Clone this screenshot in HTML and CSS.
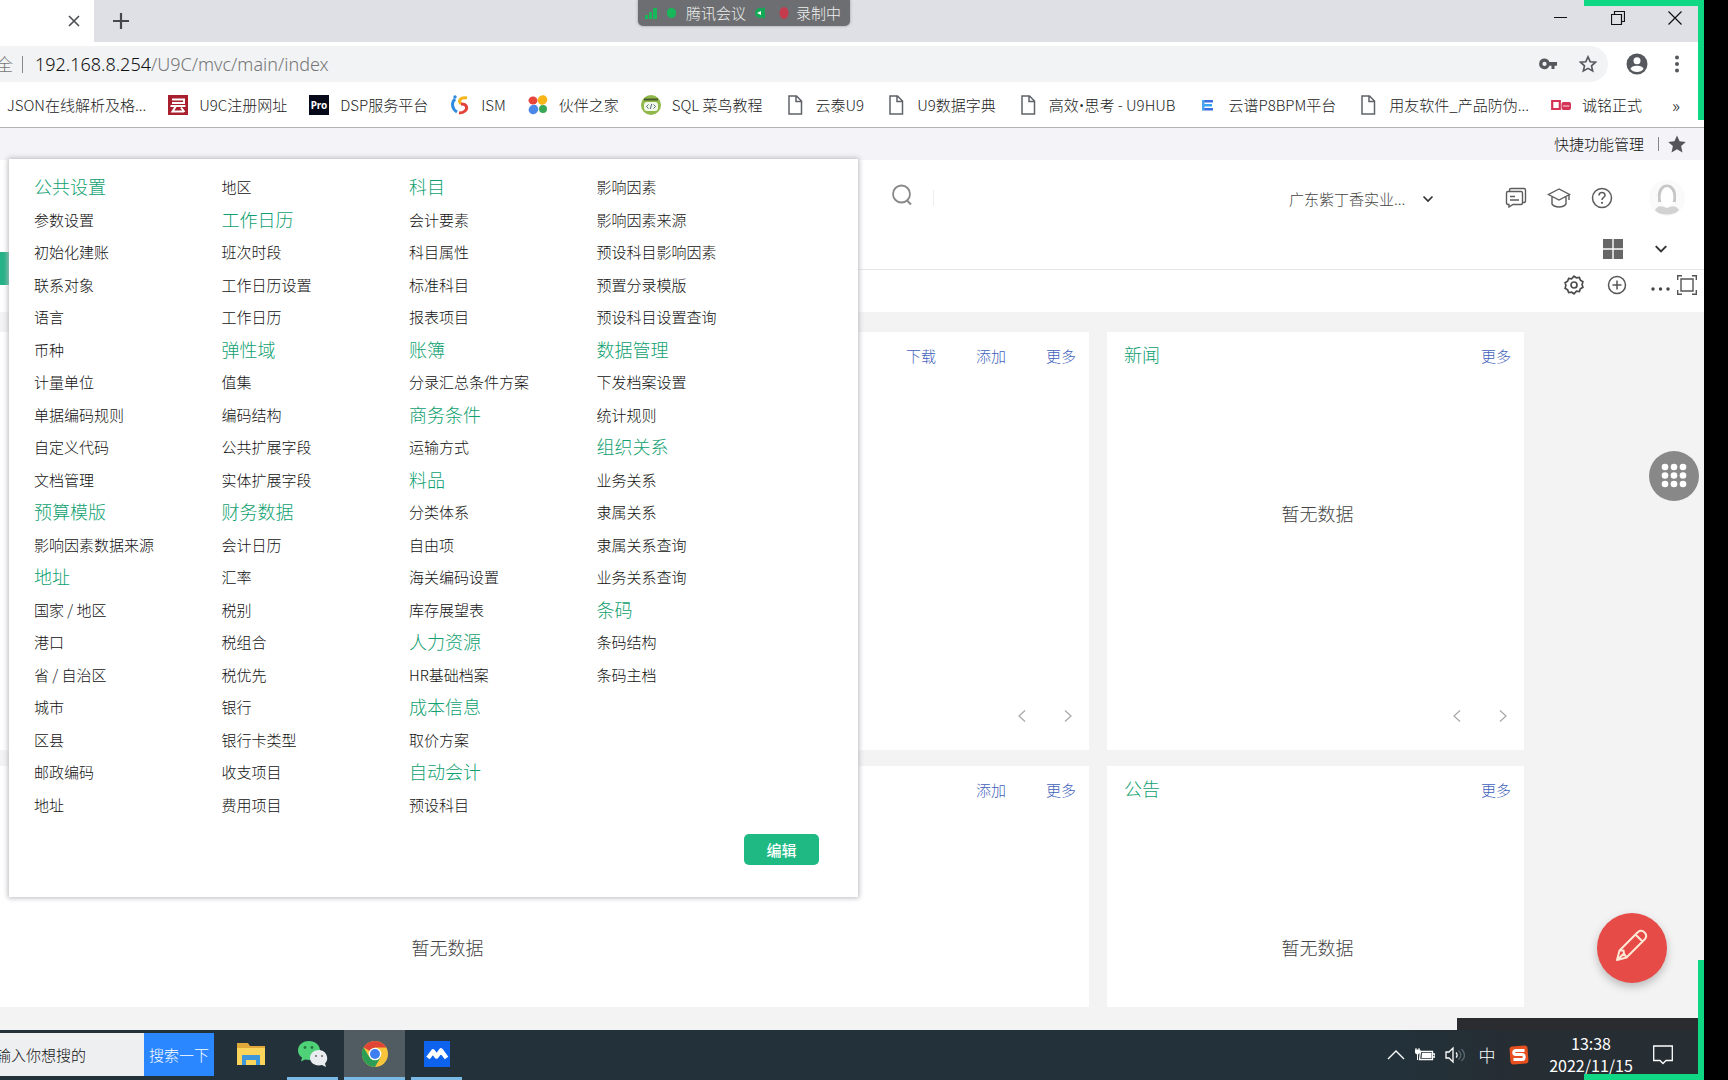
FILE: index.html
```html
<!DOCTYPE html>
<html lang="zh-CN">
<head>
<meta charset="utf-8">
<title>U9C</title>
<link rel="stylesheet" href="styles.css">
</head>
<body>
<svg width="0" height="0" class="defs" aria-hidden="true">
  <symbol id="file" viewBox="0 0 20 20"><path d="M4 1h7.500l5 5v13H4zM11 1v5.500h5.500" fill="none" stroke="#5f6368" stroke-width="1.500"/></symbol>
  <symbol id="down" viewBox="0 0 12 12"><path d="M1.500 3.500 6 8l4.500-4.500" fill="none" stroke="#333" stroke-width="1.700"/></symbol>
  <symbol id="prev" viewBox="0 0 12 14"><path d="M9 1.500 3 7l6 5.500" fill="none" stroke="#aaa" stroke-width="1.300"/></symbol>
  <symbol id="next" viewBox="0 0 12 14"><path d="M3 1.500 9 7l-6 5.500" fill="none" stroke="#aaa" stroke-width="1.300"/></symbol>
</svg>

<div class="screen">
  <div class="tabstrip">
    <div class="tab">
      <button class="plain" aria-label="关闭标签页"><svg width="12" height="12" viewBox="0 0 12 12"><path d="m1 1 10 10M11 1 1 11" stroke="#4a4d51" stroke-width="1.600"/></svg></button>
    </div>
    <button class="plain newtab" aria-label="新标签页"><svg width="16" height="16" viewBox="0 0 16 16"><path d="M8 0v16M0 8h16" stroke="#45484c" stroke-width="2.200"/></svg></button>
    <div class="winctl">
      <button class="plain" aria-label="最小化"><svg width="14" height="14" viewBox="0 0 14 14"><path d="M0 6.500h13" stroke="#111"/></svg></button>
      <button class="plain" aria-label="还原"><svg width="14" height="14" viewBox="0 0 14 14"><path d="M.5 3.500h10v10H.5zM3.500 3V.5h10v10H11" fill="none" stroke="#111" stroke-width="1.200"/></svg></button>
      <button class="plain" aria-label="关闭"><svg width="14" height="14" viewBox="0 0 14 14"><path d="m.5.5 13 13M13.500.5l-13 13" stroke="#111" stroke-width="1.200"/></svg></button>
    </div>
  </div>

  <div class="toolbar">
    <div class="omnibox">
      <span class="secure">全</span><span class="bar"></span>
      <span class="url"><b>192.168.8.254</b>/U9C/mvc/main/index</span>
      <button class="plain push" aria-label="密码"><svg width="18" height="12" viewBox="0 0 18 12"><path d="M5.500.5a5.300 5.300 0 1 0 4.900 7.300h2.100V11h3V7.800H18V4h-7.600A5.300 5.300 0 0 0 5.500.5zm0 3.300a2.100 2.100 0 1 1 0 4.200 2.100 2.100 0 0 1 0-4.200z" fill="#55585c"/></svg></button>
      <button class="plain" aria-label="收藏"><svg width="18" height="18" viewBox="0 0 18 18"><path d="m9 1.800 2.200 4.900 5.300.5-4 3.600 1.200 5.200L9 13.300 4.300 16l1.200-5.200-4-3.600 5.300-.5z" fill="none" stroke="#55585c" stroke-width="1.600"/></svg></button>
    </div>
    <button class="plain" aria-label="帐号"><svg width="22" height="22" viewBox="0 0 22 22"><circle cx="11" cy="11" r="10.500" fill="#55585c"/><circle cx="11" cy="7.800" r="3.500" fill="#fff"/><path d="M4.500 16c.5-4.500 12.500-4.500 13 0-2.500 4-10.500 4-13 0z" fill="#fff"/></svg></button>
    <button class="plain" aria-label="菜单"><svg width="6" height="18" viewBox="0 0 6 18"><g fill="#55585c"><circle cx="3" cy="2.500" r="2"/><circle cx="3" cy="9" r="2"/><circle cx="3" cy="15.500" r="2"/></g></svg></button>
  </div>

  <nav class="bookmarks">
    <a href="#">JSON在线解析及格...</a>
    <a href="#"><svg width="20" height="20" viewBox="0 0 20 20"><path d="M0 0h20v20H0z" fill="#a8202e"/><path d="M4 4.500h12V8H4M2.500 11h15M8 11l-3.500 5.500H16M13 12.500l3.500 4.500" fill="none" stroke="#fff" stroke-width="2"/></svg>U9C注册网址</a>
    <a href="#"><svg width="20" height="20" viewBox="0 0 20 20"><path d="M0 0h20v20H0z" fill="#05091a"/><text x="10" y="14" text-anchor="middle" class="pro">Pro</text></svg>DSP服务平台</a>
    <a href="#"><svg width="20" height="20" viewBox="0 0 20 20"><g fill="none" stroke-width="3"><path d="M5 4c-4 4-3 10 2 13" stroke="#2f8be0"/><path d="M17 3c-7-1-9 3-6 6" stroke="#f5b51b"/><path d="M11 9c6 0 7 4 4 7-2 2-4 2-6 2" stroke="#e2433a"/></g><circle cx="5" cy="2" r="1.700" fill="#2f8be0"/></svg>ISM</a>
    <a href="#"><svg width="20" height="20" viewBox="0 0 20 20"><ellipse cx="5" cy="5.500" rx="4.500" ry="4" fill="#e8443a"/><ellipse cx="14.500" cy="5" rx="5" ry="4.500" fill="#f7b516" transform="rotate(-35 14.500 5)"/><ellipse cx="5.500" cy="14.500" rx="5" ry="4.500" fill="#4a87ea" transform="rotate(-35 5.500 14.500)"/><circle cx="15" cy="14" r="4" fill="#39a854"/></svg>伙伴之家</a>
    <a href="#"><svg width="20" height="20" viewBox="0 0 20 20"><circle cx="10" cy="10" r="10" fill="#8fb94a"/><rect x="3" y="7" width="14" height="9" rx="3" fill="#f3f7e8"/><path d="M3 4.500h14" stroke="#4a5a2c" stroke-width="2"/><path d="M7.500 9.500 5.500 11.500l2 2M12.500 9.500l2 2-2 2M10.700 9l-1.400 5" fill="none" stroke="#4c6b88"/></svg>SQL 菜鸟教程</a>
    <a href="#"><svg width="20" height="20"><use href="#file"/></svg>云泰U9</a>
    <a href="#"><svg width="20" height="20"><use href="#file"/></svg>U9数据字典</a>
    <a href="#"><svg width="20" height="20"><use href="#file"/></svg><span>高效<span class="bullet">•</span>思考 - U9HUB</span></a>
    <a href="#"><svg width="20" height="20" viewBox="0 0 20 20"><path d="M4 5h11v2.500H4zM4 13h11v2.500H4z" fill="#3a6fe0"/><path d="M4 9h10v2.500H4z" fill="#38a6ee"/><path d="M4 5h2.500v10H4z" fill="#4aa4f0"/></svg>云谱P8BPM平台</a>
    <a href="#"><svg width="20" height="20"><use href="#file"/></svg>用友软件_产品防伪...</a>
    <a href="#"><svg width="20" height="20" viewBox="0 0 20 20"><path d="M1.200 6h7.600v8H1.200z" fill="#fff" stroke="#d43355" stroke-width="2.200"/><rect x="10.500" y="7" width="9.500" height="8" rx="2" fill="#d43355"/><path d="M12 11h6.500" stroke="#f3a5b4" stroke-width="1.500"/></svg>诚铭正式</a>
    <a href="#" class="more">»</a>
  </nav>

  <div class="shortcut">
    <a href="#">快捷功能管理</a><span class="bar"></span>
    <svg width="18" height="18" viewBox="0 0 18 18"><path d="m9 .5 2.600 5.800 6.200.6-4.700 4.200 1.400 6.300L9 14.200l-5.500 3.200 1.400-6.300L.2 6.900l6.200-.6z" fill="#55555a"/></svg>
  </div>

  <main class="page">
    <header class="apphead">
      <svg class="search" width="22" height="22" viewBox="0 0 22 22"><circle cx="10.500" cy="10" r="8.500" fill="none" stroke="#888" stroke-width="1.800"/><path d="m16 16.500 4 4" stroke="#888" stroke-width="2"/></svg>
      <span class="caret"></span>
      <label class="org"><select aria-label="组织"><option>广东紫丁香实业...</option></select><svg width="12" height="12"><use href="#down"/></svg></label>
      <div class="headicons">
        <svg width="24" height="24" viewBox="0 0 24 24"><g fill="none" stroke="#5c5c5c" stroke-width="1.400"><path d="M5.500 5V4a1.500 1.500 0 0 1 1.500-1.500h13A1.500 1.500 0 0 1 21.500 4v11a1.500 1.500 0 0 1-1.500 1.500h-1"/><path d="M4 5.500h13A1.500 1.500 0 0 1 18.500 7v10a1.500 1.500 0 0 1-1.500 1.500H9l-4 2.500v-2.500H4A1.500 1.500 0 0 1 2.500 17V7A1.500 1.500 0 0 1 4 5.500zM6 10.500h5M6 14h9"/></g></svg>
        <svg width="24" height="24" viewBox="0 0 24 24"><path d="M12 3 1.500 8.500 12 14l10.500-5.500zM5 11v7c3 4 11 4 14 0v-7M22 9v5" fill="none" stroke="#5c5c5c" stroke-width="1.400"/></svg>
        <svg width="24" height="24" viewBox="0 0 24 24"><g fill="none" stroke="#5c5c5c" stroke-width="1.500"><circle cx="12" cy="12" r="9.500"/><path d="M9 9.500c0-4 6-4 6 0 0 2-3 2-3 4.500"/></g><circle cx="12" cy="16.800" r="1.100" fill="#5c5c5c"/></svg>
      </div>
      <svg class="avatar" width="36" height="36" viewBox="0 0 36 36"><circle cx="18" cy="18" r="18" fill="#fafafa"/><path d="M9 18C7 0 29 0 27 18v4H9z" fill="#c6c6c6"/><ellipse cx="18" cy="17" rx="6.500" ry="10" fill="#fff"/><path d="M6 30c4-6 8-3 12-2 4-1 8-4 12 2-4 6-20 6-24 0z" fill="#d2d2d2"/></svg>
    </header>
    <div class="apptabs">
      <button class="plain" aria-label="全部页签"><svg width="20" height="20" viewBox="0 0 20 20"><path d="M0 0h9.300v9.300H0zM10.700 0H20v9.300h-9.300zM0 10.700h9.300V20H0zM10.700 10.700H20V20h-9.300z" fill="#666"/></svg></button>
      <button class="plain" aria-label="展开"><svg width="14" height="14"><use href="#down"/></svg></button>
      <span class="lefttab"></span>
    </div>
    <div class="tools">
      <button class="plain" aria-label="设置"><svg width="20" height="20" viewBox="0 0 20 20"><g fill="none" stroke="#4d4d4d" stroke-width="1.700"><path d="m10 1.200 2.400 1.600 2.900-.3 1.100 2.600 2.500 1.600-.8 2.800.8 2.800-2.500 1.600-1.100 2.700-2.900-.4L10 18.800l-2.400-1.600-2.900.4-1.100-2.700-2.500-1.600.8-2.800-.8-2.800 2.500-1.600 1.100-2.600 2.900.3z"/><circle cx="10" cy="10" r="3"/></g></svg></button>
      <button class="plain" aria-label="添加组件"><svg width="20" height="20" viewBox="0 0 20 20"><g fill="none" stroke="#555" stroke-width="1.500"><circle cx="10" cy="10" r="8.500"/><path d="M10 5.500v9M5.500 10h9"/></g></svg></button>
      <span class="pair"><button class="plain dots" aria-label="更多操作"><svg width="20" height="20" viewBox="0 0 20 20"><g fill="#444"><circle cx="3" cy="14" r="1.700"/><circle cx="10.500" cy="14" r="1.700"/><circle cx="18" cy="14" r="1.700"/></g></svg></button>
      <button class="plain" aria-label="全屏"><svg width="20" height="20" viewBox="0 0 20 20"><path d="M4 4h12v12H4zM.7 5V.7H5M15 .7h4.300V5M19.300 15v4.300H15M5 19.300H.7V15" fill="none" stroke="#555" stroke-width="1.400"/></svg></button></span>
    </div>

    <div class="dash">
      <section class="card wide">
        <div class="cardhead"><a href="#">下载</a><a href="#">添加</a><a href="#">更多</a></div>
        <div class="pager"><button class="plain" aria-label="上一页"><svg width="12" height="14"><use href="#prev"/></svg></button><button class="plain" aria-label="下一页"><svg width="12" height="14"><use href="#next"/></svg></button></div>
      </section>
      <section class="card">
        <div class="cardhead"><h2>新闻</h2><a href="#">更多</a></div>
        <p class="empty">暂无数据</p>
        <div class="pager"><button class="plain" aria-label="上一页"><svg width="12" height="14"><use href="#prev"/></svg></button><button class="plain" aria-label="下一页"><svg width="12" height="14"><use href="#next"/></svg></button></div>
      </section>
      <section class="card wide">
        <div class="cardhead"><a href="#">添加</a><a href="#">更多</a></div>
        <p class="empty">暂无数据</p>
      </section>
      <section class="card">
        <div class="cardhead"><h2>公告</h2><a href="#">更多</a></div>
        <p class="empty">暂无数据</p>
      </section>
    </div>
  </main>

  <div class="popup">
    <ul class="menu">
      <li><h3>公共设置</h3></li><li><a href="#">参数设置</a></li><li><a href="#">初始化建账</a></li><li><a href="#">联系对象</a></li><li><a href="#">语言</a></li><li><a href="#">币种</a></li><li><a href="#">计量单位</a></li><li><a href="#">单据编码规则</a></li><li><a href="#">自定义代码</a></li><li><a href="#">文档管理</a></li><li><h3>预算模版</h3></li><li><a href="#">影响因素数据来源</a></li><li><h3>地址</h3></li><li><a href="#">国家 / 地区</a></li><li><a href="#">港口</a></li><li><a href="#">省 / 自治区</a></li><li><a href="#">城市</a></li><li><a href="#">区县</a></li><li><a href="#">邮政编码</a></li><li><a href="#">地址</a></li>
      <li><a href="#">地区</a></li><li><h3>工作日历</h3></li><li><a href="#">班次时段</a></li><li><a href="#">工作日历设置</a></li><li><a href="#">工作日历</a></li><li><h3>弹性域</h3></li><li><a href="#">值集</a></li><li><a href="#">编码结构</a></li><li><a href="#">公共扩展字段</a></li><li><a href="#">实体扩展字段</a></li><li><h3>财务数据</h3></li><li><a href="#">会计日历</a></li><li><a href="#">汇率</a></li><li><a href="#">税别</a></li><li><a href="#">税组合</a></li><li><a href="#">税优先</a></li><li><a href="#">银行</a></li><li><a href="#">银行卡类型</a></li><li><a href="#">收支项目</a></li><li><a href="#">费用项目</a></li>
      <li><h3>科目</h3></li><li><a href="#">会计要素</a></li><li><a href="#">科目属性</a></li><li><a href="#">标准科目</a></li><li><a href="#">报表项目</a></li><li><h3>账簿</h3></li><li><a href="#">分录汇总条件方案</a></li><li><h3>商务条件</h3></li><li><a href="#">运输方式</a></li><li><h3>料品</h3></li><li><a href="#">分类体系</a></li><li><a href="#">自由项</a></li><li><a href="#">海关编码设置</a></li><li><a href="#">库存展望表</a></li><li><h3>人力资源</h3></li><li><a href="#">HR基础档案</a></li><li><h3>成本信息</h3></li><li><a href="#">取价方案</a></li><li><h3>自动会计</h3></li><li><a href="#">预设科目</a></li>
      <li><a href="#">影响因素</a></li><li><a href="#">影响因素来源</a></li><li><a href="#">预设科目影响因素</a></li><li><a href="#">预置分录模版</a></li><li><a href="#">预设科目设置查询</a></li><li><h3>数据管理</h3></li><li><a href="#">下发档案设置</a></li><li><a href="#">统计规则</a></li><li><h3>组织关系</h3></li><li><a href="#">业务关系</a></li><li><a href="#">隶属关系</a></li><li><a href="#">隶属关系查询</a></li><li><a href="#">业务关系查询</a></li><li><h3>条码</h3></li><li><a href="#">条码结构</a></li><li><a href="#">条码主档</a></li>
    </ul>
    <button class="edit">编辑</button>
  </div>

  <button class="plain fab apps" aria-label="应用"><svg width="26" height="26" viewBox="0 0 26 26"><g fill="#fff"><circle cx="4" cy="4" r="3.300"/><circle cx="13" cy="4" r="3.300"/><circle cx="22" cy="4" r="3.300"/><circle cx="4" cy="12.500" r="3.300"/><circle cx="13" cy="12.500" r="3.300"/><circle cx="22" cy="12.500" r="3.300"/><circle cx="4" cy="21" r="3.300"/><circle cx="13" cy="21" r="3.300"/><circle cx="22" cy="21" r="3.300"/></g></svg></button>
  <button class="plain fab pen" aria-label="编写"><svg width="32" height="32" viewBox="0 0 32 32"><path d="M1 31 3.500 21.500 22 3a5 5 0 0 1 7 7L10.500 28.500zM3.500 21.500l4 0 .5 3 2.500 4M19.500 5.500l7 7M1 31l7-6.500" fill="none" stroke="#ffe9d6" stroke-width="2" stroke-linejoin="round"/></svg></button>

  <div class="meeting">
    <svg width="38" height="16" viewBox="0 0 38 16"><g fill="#17b85a"><path d="M2 10h3v4H2zM6 7h3v7H6zM10 3h4v11h-4z"/><rect x="24" y="3" width="9" height="10" rx="4.500"/></g></svg>
    <span>腾讯会议</span>
    <svg width="40" height="16" viewBox="0 0 40 16"><path d="M14 2v12L4 8z" fill="#12a957"/><circle cx="9" cy="8" r="5" fill="#12a957"/><path d="m6 8 4-2v4z" fill="#fff"/><ellipse cx="33" cy="8" rx="4.500" ry="6" fill="#c43b4d"/></svg>
    <span>录制中</span>
  </div>

  <footer class="taskbar">
    <div class="find"><input type="text" value="输入你想搜的" aria-label="搜索"><button>搜索一下</button></div>
    <button class="plain task" aria-label="文件资源管理器"><svg width="30" height="26" viewBox="0 0 30 26"><path d="M1 2h11l2 3h15v19H1z" fill="#e0a93a"/><path d="M1 7h28v17H1z" fill="#fbd45c"/><path d="M6 14h18v10h-4v-5h-10v5H6z" fill="#3d97d8"/></svg></button>
    <button class="plain task run" aria-label="微信"><svg width="32" height="28" viewBox="0 0 32 28"><path d="M12 1C5 1 1 5.500 1 10.500c0 3 1.500 5.500 4 7L4 21.500l4-2c9 2 15-3 15-9C23 5 18 1 12 1z" fill="#4fd177"/><path d="M22 10c-5 0-9 3.500-9 8s5 9 12 7l4 2-1-3.500c5-5 1-13.500-6-13.500z" fill="#e9edf0"/><g fill="#27763f"><circle cx="8" cy="7.500" r="1.400"/><circle cx="15" cy="7.500" r="1.400"/></g><g fill="#666"><circle cx="19" cy="16" r="1"/><circle cx="25" cy="16" r="1"/></g></svg></button>
    <button class="plain task run active" aria-label="Chrome"><svg width="28" height="28" viewBox="0 0 28 28"><circle cx="14" cy="14" r="13" fill="#f7c43b"/><path d="M14 14 2.700 7.500A13 13 0 0 1 25.300 7.500H14z" fill="#df4436"/><path d="M2.700 7.500A13 13 0 0 0 14 27l5.600-9.700L8.400 17.200z" fill="#2c9d55"/><circle cx="14" cy="14" r="6.300" fill="#fff"/><circle cx="14" cy="14" r="5" fill="#3f7ff0"/></svg></button>
    <button class="plain task run" aria-label="腾讯会议"><svg width="26" height="26" viewBox="0 0 26 26"><path d="M0 0h26v26H0z" fill="#0d62ee"/><path d="m4 17 5-6.500 3.500 5L17 9.500l5.500 7.500" fill="none" stroke="#fff" stroke-width="4.500" stroke-linejoin="round"/></svg></button>
    <div class="tray">
      <svg width="18" height="20" viewBox="0 0 18 20"><path d="m1 14 8-8 8 8" fill="none" stroke="#fff" stroke-width="1.400"/></svg>
      <svg width="20" height="20" viewBox="0 0 20 20"><path d="M5.500 6.500h12v8h-13zM18 9h2v3h-2" fill="none" stroke="#fff" stroke-width="1.300"/><path d="M7 8h9.500v5H6.500z" fill="#fff"/><path d="M0 5h5v2.500L2.500 9.500 0 7.500zM1 3v2M4 3v2M2.500 9v6" fill="#fff" stroke="#fff"/></svg>
      <svg width="20" height="20" viewBox="0 0 20 20"><path d="M1 7h3l4-4v14l-4-4H1z" fill="none" stroke="#fff" stroke-width="1.300"/><path d="M11 7.500c1.500 1.500 1.500 4 0 5" fill="none" stroke="#fff" stroke-width="1.300"/><path d="M13.500 5.500c3 3 3 6.500 0 9M16.500 4c4 4 4 8.500 0 12" fill="none" stroke="#59656c" stroke-width="1.300"/></svg>
      <span class="ime">中</span>
      <svg width="20" height="20" viewBox="0 0 20 20"><rect x="1" y="1" width="18" height="18" rx="3" fill="#e8501f" transform="rotate(-4 10 10)"/><path d="M15.500 5.500H7c-3 0-3 4 0 4h6c3 0 3 5 0 5H4.500" fill="none" stroke="#fff" stroke-width="3"/></svg>
      <div class="clock"><span>13:38</span><span>2022/11/15</span></div>
      <svg width="20" height="20" viewBox="0 0 20 20"><path d="M.7 1h18.600v14.500H13L10 18.500 7 15.500H.7z" fill="none" stroke="#fff" stroke-width="1.300"/></svg>
    </div>
  </footer>
  <span class="corner top"></span>
  <span class="corner bottom"></span>
</div>
</body>
</html>
```
FILE: styles.css
```css
* { box-sizing: border-box; }
body {
  margin: 0;
  padding-right: 24px;
  background: #000;
  font: 300 15px/20px "Noto Sans CJK SC", sans-serif;
  color: #111;
}
button, input, select { font: inherit; color: inherit; }
a { color: inherit; text-decoration: none; }
svg { display: block; flex: none; }
h2, h3, p, ul { margin: 0; padding: 0; font-weight: 300; }
.defs { position: absolute; }
.plain { display: flex; align-items: center; justify-content: center; padding: 0; border: 0; background: none; }

.screen {
  position: relative;
  display: flex;
  flex-direction: column;
  min-height: 100vh;
  background: #fff;
  overflow: hidden;
}

/* browser window */
.tabstrip { display: flex; align-items: center; height: 42px; background: #dee0e6; }
.tab {
  display: flex; align-items: center; justify-content: flex-end;
  align-self: stretch;
  width: 94px; padding-right: 14px;
  background: #fff;
}
.newtab { margin-left: 19px; }
.winctl { display: flex; gap: 43px; margin-left: auto; padding: 0 22px 6px 0; }

.toolbar { display: flex; align-items: center; gap: 18px; height: 45px; padding: 0 24px 1px 0; }
.toolbar > .plain + .plain { margin-left: 8px; }
.omnibox {
  display: flex; align-items: center;
  flex: 1;
  height: 36px; padding-right: 11px;
  border-radius: 0 18px 18px 0;
  background: #f1f3f5;
  font-size: 18px; line-height: 24px;
  color: #777;
}
.secure { margin-left: -4px; font-size: 17px; }
.bar { width: 1px; height: 17px; background: #888; }
.omnibox .bar { margin: 0 12px 0 9px; }
.url { font-family: "Noto Sans", sans-serif; }
.url b { font-weight: 300; color: #111; }
.push { margin: 0 22px 0 auto; }

.bookmarks {
  display: flex; align-items: center; gap: 22px;
  height: 41px; padding: 0 24px 4px 7px;
  border-bottom: 1px solid #b4b4b6;
  white-space: nowrap;
}
.bookmarks a { display: flex; align-items: center; gap: 11px; color: #222; }
.bookmarks .more { margin-left: auto; font-size: 18px; }
.bullet { font-family: "Noto Sans", sans-serif; }
.pro { font: 700 10px "Noto Sans", sans-serif; fill: #fff; }

/* application */
.shortcut {
  display: flex; align-items: center; justify-content: flex-end;
  height: 32px; padding-right: 18px;
  background: #f4f3f7;
}
.shortcut .bar { height: 14px; margin: 0 9px 0 14px; }

.page { display: flex; flex-direction: column; flex: 1; }
.apphead { display: flex; align-items: center; height: 76px; padding-right: 19px; }
.search { margin: 0 20px 6px 891px; }
.caret { width: 1px; height: 16px; background: #eee; }
.org { display: flex; align-items: center; margin-left: auto; padding-top: 2px; color: #444; }
.org select { width: 133px; padding: 0; border: 0; background: none; appearance: none; }
.headicons { display: flex; gap: 19px; margin: 0 35px 0 70px; }
.apptabs {
  position: relative;
  display: flex; align-items: center; justify-content: flex-end; gap: 31px;
  height: 34px; padding: 0 36px 8px 0;
  border-bottom: 1px solid #e6e6e6;
}
.lefttab { position: absolute; left: 0; top: 16px; width: 9px; height: 33px; background: #25b285; }
.tools {
  display: flex; align-items: center; justify-content: flex-end; gap: 23px;
  height: 42px; padding: 0 7px 12px 0;
}
.pair { display: flex; gap: 7px; }

.dash {
  display: grid;
  grid-template-columns: repeat(4, minmax(0, 1fr));
  grid-template-rows: 418px minmax(241px, 1fr);
  gap: 16px 18px;
  flex: 1;
  margin-left: -198px;
  padding: 20px 180px 23px 0;
  background: #f3f3f3;
}
.card { display: flex; flex-direction: column; padding: 11px 13px 27px 17px; background: #fff; }
.wide { grid-column: span 3; }
.cardhead { display: flex; align-items: center; justify-content: flex-end; gap: 40px; height: 26px; }
.cardhead h2 { margin-right: auto; padding-bottom: 4px; font-size: 18px; line-height: 22px; color: #0f9f70; }
.cardhead a { color: #3f5fba; }
.empty { margin-top: 131px; font-size: 18px; line-height: 26px; text-align: center; color: #444; }
.pager { display: flex; justify-content: flex-end; gap: 34px; margin-top: auto; padding-right: 2px; }

.popup {
  position: absolute; left: 9px; top: 159px;
  width: 849px; padding: 12px 39px 32px 25px;
  background: #fff;
  box-shadow: 0 0 5px 1px #b8b8c0;
}
.menu {
  display: grid;
  grid-auto-flow: column;
  grid-template-rows: repeat(20, 1fr);
  grid-template-columns: repeat(4, 1fr);
  height: 650px;
  margin-right: 35px;
  list-style: none;
  white-space: nowrap;
}
.menu li { display: flex; align-items: center; }
.menu h3 { padding-bottom: 2px; font-size: 18px; line-height: 24px; color: #0f9f70; }
.edit {
  display: block;
  width: 75px; height: 31px;
  margin: 13px 0 0 auto; padding: 0;
  border: 0; border-radius: 5px;
  background: #1fba84;
  color: #fff; font-weight: 500;
}

.fab { position: absolute; border-radius: 50%; }
.apps { right: 5px; top: 451px; width: 50px; height: 50px; background: #888; }
.pen { right: 37px; bottom: 97px; width: 70px; height: 70px; padding-bottom: 6px; background: #e64b47; box-shadow: 0 4px 8px #bbb; }

.meeting {
  position: absolute; left: 638px; top: 0;
  display: flex; align-items: center; gap: 5px;
  width: 212px; height: 26px; padding-left: 5px;
  border-radius: 0 0 5px 5px;
  background: #6c6e71;
  color: #eee;
  box-shadow: 0 0 3px #999;
  white-space: nowrap;
}

/* system taskbar */
.taskbar { position: relative; display: flex; gap: 6px; height: 50px; background: #22313a; color: #fff; }
.taskbar::after {
  content: "";
  position: absolute; right: 6px; bottom: 100%;
  width: 241px; height: 12px;
  background: #2a2c2f;
}
.find { display: flex; margin: 3px 0 4px; }
.find input { width: 144px; padding: 0; border: 0; background: #eeeff1; color: #111; text-indent: -4px; }
.find button { width: 70px; padding: 0; border: 0; background: #2b87ff; color: #fff; white-space: nowrap; }
.task { width: 61px; border-bottom: 3px solid transparent; }
.run { width: 51px; border-bottom-color: #7ab8e6; }
.active { width: 61px; background: #515c62; }
.tray {
  display: flex; align-items: center; gap: 10px;
  margin-left: auto; padding-right: 31px;
  background: linear-gradient(90deg, #22313a, #262d33 40%);
}
.ime { width: 24px; font-size: 17px; text-align: center; }
.clock {
  display: flex; flex-direction: column; align-items: center;
  width: 90px; margin: 0 7px 2px;
  font-size: 16px; line-height: 22px; font-weight: 400;
}

.corner { position: absolute; right: 0; width: 120px; height: 120px; border: 0 solid #0fd885; pointer-events: none; }
.top { top: 0; border-width: 6px 6px 0 0; }
.bottom { bottom: 0; border-width: 0 6px 6px 0; }
```
